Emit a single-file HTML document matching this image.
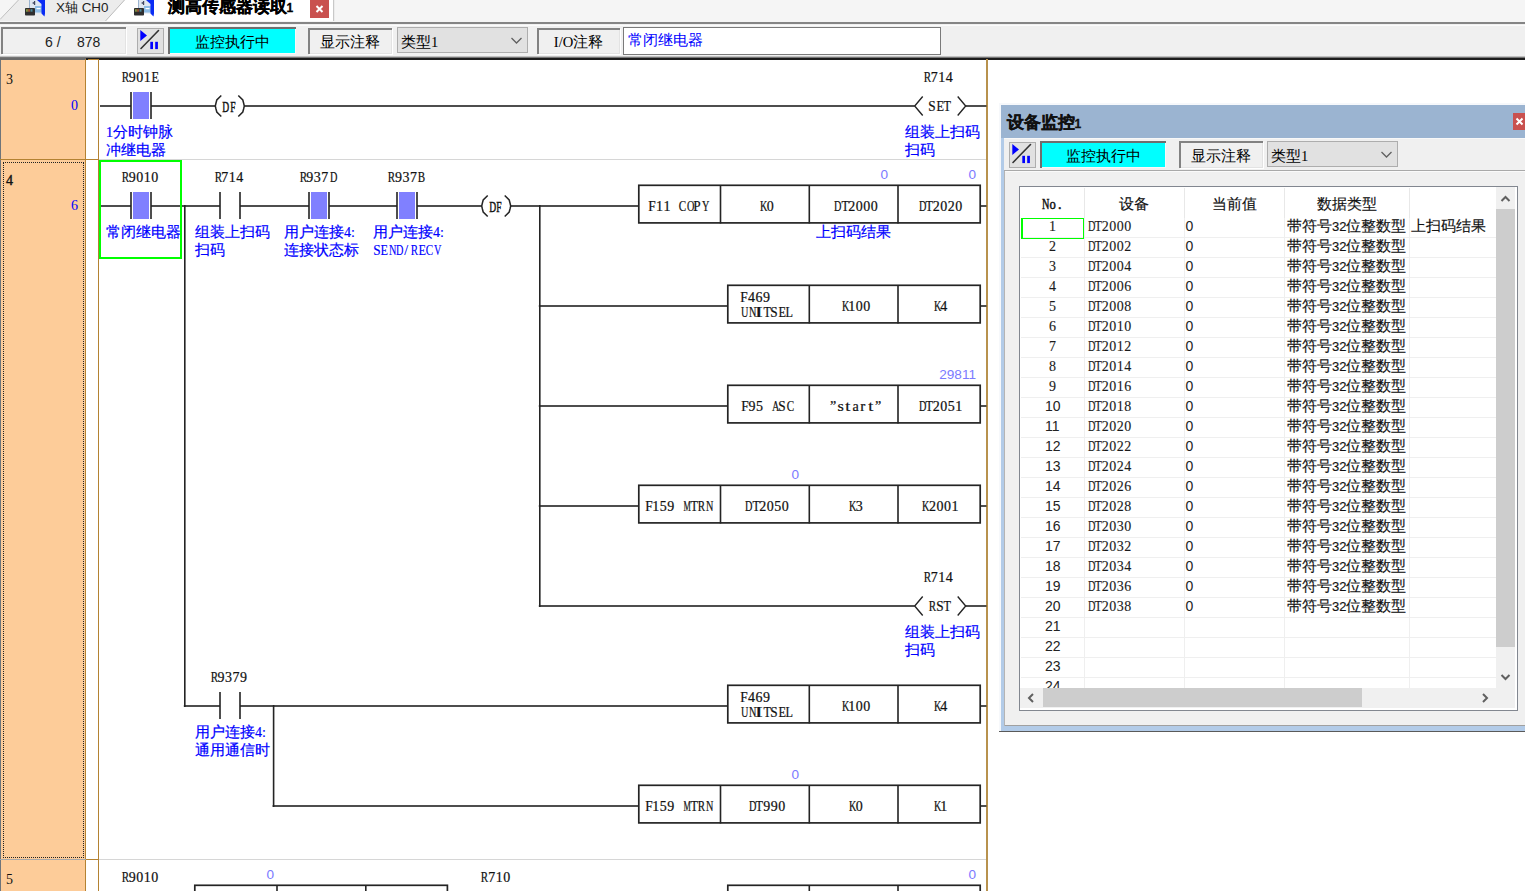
<!DOCTYPE html><html><head><meta charset="utf-8"><style>
html,body{margin:0;padding:0;background:#fff;}
#root{position:relative;width:1525px;height:891px;overflow:hidden;background:#fff;}
#root div{position:absolute;}
.t{white-space:nowrap;font-family:"Liberation Sans",sans-serif;}
.m{white-space:nowrap;font-family:"Liberation Serif",serif;font-size:14px;line-height:14px;color:#111;-webkit-text-stroke:0.22px currentColor;}
.m i{font-style:normal;display:inline-block;width:7.5px;text-align:center;}
.c{white-space:nowrap;font-family:"Liberation Sans",sans-serif;font-size:14.6px;line-height:16px;color:#0000ff;-webkit-text-stroke:0.2px #0000ff;}
.sf{font-family:"Liberation Serif",serif;}
.sf2{font-family:"Liberation Serif",serif;font-size:14px;}
.rn{font-family:"Liberation Serif",serif;font-size:14px;line-height:14px;color:#111;}
.v{font-family:"Liberation Sans",sans-serif;font-size:13.6px;line-height:13px;color:#7b7bff;text-align:right;white-space:nowrap;}
.m2{font-family:"Liberation Serif",serif;font-size:14px;line-height:14px;color:#111;white-space:nowrap;}
.tb{font-family:"Liberation Sans",sans-serif;font-size:14.6px;line-height:18px;color:#111;white-space:nowrap;-webkit-text-stroke:0.15px #111;}
.tn{font-family:"Liberation Sans",sans-serif;font-size:14px;line-height:18px;color:#222;white-space:nowrap;}
.tn2{font-size:13px;}
</style></head><body><div id="root">
<div style="left:0px;top:0px;width:1525px;height:22px;background:#f5f5f5;"></div>
<svg style="position:absolute;left:0;top:0" width="400" height="24"><path d="M0 20 L19 0 L125 0 L106 21 L0 21 Z" fill="#ececec"/><path d="M0 19.5 L18.5 0" stroke="#bdbdbd" stroke-width="1" fill="none"/><path d="M106 21 L125 0 L333 0 L333 21 Z" fill="#ffffff"/><path d="M105.5 21 L124.5 0" stroke="#bdbdbd" stroke-width="1" fill="none"/><rect x="333" y="0" width="1.2" height="21" fill="#c8c8c8"/></svg>
<svg style="position:absolute;left:20px;top:0" width="28" height="18"><rect x="9" y="0" width="13" height="13.5" fill="#dfe6f0"/><rect x="9" y="0" width="1" height="8" fill="#9ab4d0"/><path d="M12 3 L14 1.8 L14 4.2 Z" fill="#505870"/><rect x="14" y="1" width="1.2" height="4" fill="#404860"/><rect x="15" y="6" width="7" height="6.5" fill="#8fbde6"/><rect x="16.5" y="8" width="4" height="1.2" fill="#ffffff"/><path d="M17 0 L25 0 L25 13.5 L24.5 16.5 L21.5 13.5 L21.5 4 Z" fill="#0a2cf5"/><rect x="5" y="8" width="10" height="7.5" rx="0.8" fill="#2e2e2e"/><rect x="6" y="9.2" width="1.3" height="2.5" fill="#7a9a40"/><rect x="7.3" y="9.2" width="1.3" height="2.5" fill="#a09040"/><rect x="8.6" y="9.2" width="1.3" height="2.5" fill="#b04a30"/><rect x="10.5" y="9.2" width="2" height="2.5" fill="#4a8a9a"/></svg>
<svg style="position:absolute;left:129px;top:0" width="28" height="18"><rect x="9" y="0" width="13" height="13.5" fill="#dfe6f0"/><rect x="9" y="0" width="1" height="8" fill="#9ab4d0"/><path d="M12 3 L14 1.8 L14 4.2 Z" fill="#505870"/><rect x="14" y="1" width="1.2" height="4" fill="#404860"/><rect x="15" y="6" width="7" height="6.5" fill="#8fbde6"/><rect x="16.5" y="8" width="4" height="1.2" fill="#ffffff"/><path d="M17 0 L25 0 L25 13.5 L24.5 16.5 L21.5 13.5 L21.5 4 Z" fill="#0a2cf5"/><rect x="5" y="8" width="10" height="7.5" rx="0.8" fill="#2e2e2e"/><rect x="6" y="9.2" width="1.3" height="2.5" fill="#7a9a40"/><rect x="7.3" y="9.2" width="1.3" height="2.5" fill="#a09040"/><rect x="8.6" y="9.2" width="1.3" height="2.5" fill="#b04a30"/><rect x="10.5" y="9.2" width="2" height="2.5" fill="#4a8a9a"/></svg>
<div class="t ui" style="left:56px;top:0px;font-size:13.4px;line-height:16px;color:#222">X轴 CH0</div>
<div class="t ui" style="left:167.5px;top:-3px;font-size:17.4px;line-height:18px;font-weight:bold;color:#000;-webkit-text-stroke:0.3px #000">测高传感器读取<span style="font-size:12px">1</span></div>
<div style="left:310px;top:0px;width:19px;height:18px;background:#c9514f;"></div>
<svg style="position:absolute;left:310px;top:0" width="19" height="18"><path d="M6.5 6 L12.5 12 M12.5 6 L6.5 12" stroke="#fff" stroke-width="2"/></svg>
<div style="left:0px;top:22px;width:1525px;height:2px;background:#858585;"></div>
<div style="left:0px;top:24px;width:1525px;height:33px;background:#f0f0f0;"></div>
<div style="left:0px;top:24.5px;width:1525px;height:1.5px;background:#fbfbfb;"></div>
<div style="left:1px;top:27px;width:125px;height:27px;background:#f0f0f0;box-shadow: inset 2px 2px 0 #828282, inset -1px -1px 0 #e3e3e3, 1px 1px 0 #ffffff;"></div>
<div class="t ui" style="left:45px;top:32.5px;font-size:14px;line-height:18px;color:#222">6 /</div>
<div class="t ui" style="left:77px;top:32.5px;font-size:14px;line-height:18px;color:#222">878</div>
<svg style="position:absolute;left:137px;top:28px" width="28" height="27"><rect x="0.5" y="0.5" width="26" height="25" fill="#e1e1e1" stroke="#adadad"/><path d="M3.3 2 L10 7.5 L3.3 13 Z" fill="#0000ff"/><path d="M4 20.5 L21.5 2.5" stroke="#333" stroke-width="1.6" stroke-linecap="round"/><rect x="13.3" y="13.8" width="2.7" height="7.3" fill="#0000ff"/><rect x="18.2" y="13.8" width="2.7" height="7.3" fill="#0000ff"/></svg>
<div style="left:168px;top:27px;width:128px;height:27px;background:#00ffff;box-shadow: inset 2px 2px 0 #6e6e6e, inset -1px -1px 0 #f8f8f8;"></div>
<div class="t ui" style="left:168px;top:32px;width:128px;text-align:center;font-size:14.6px;line-height:20px;color:#000">监控执行中</div>
<div style="left:308px;top:28px;width:84px;height:26px;background:#f0f0f0;box-shadow: inset 2px 2px 0 #828282, inset -1px -1px 0 #e3e3e3, 1px 1px 0 #ffffff;"></div>
<div class="t ui" style="left:308px;top:32px;width:84px;text-align:center;font-size:14.6px;line-height:20px;color:#000">显示注释</div>
<div style="left:397px;top:27px;width:131px;height:26px;background:#e1e1e1;box-sizing:border-box;border:1px solid #adadad;"></div>
<div class="t ui" style="left:401px;top:32px;font-size:14.6px;line-height:20px;color:#000">类型<span class="sf">1</span></div>
<svg style="position:absolute;left:510px;top:36px" width="14" height="10"><path d="M1.5 2 L6.5 7 L11.5 2" fill="none" stroke="#606060" stroke-width="1.3"/></svg>
<div style="left:537px;top:28px;width:83px;height:26px;background:#f0f0f0;box-shadow: inset 2px 2px 0 #828282, inset -1px -1px 0 #e3e3e3, 1px 1px 0 #ffffff;"></div>
<div class="t ui" style="left:537px;top:32px;width:83px;text-align:center;font-size:14.6px;line-height:20px;color:#000"><span class="sf">I/O</span>注释</div>
<div style="left:623px;top:27px;width:318px;height:28px;background:#ffffff;box-sizing:border-box;border:1px solid #7a7a7a;"></div>
<div class="t ui" style="left:628px;top:30px;font-size:14.6px;line-height:20px;color:#0000ff">常闭继电器</div>
<div style="left:0px;top:56px;width:1525px;height:1px;background:#c0c0c0;"></div>
<div style="left:0px;top:57px;width:1525px;height:1px;background:#767676;"></div>
<div style="left:0px;top:59px;width:1525px;height:832px;background:#ffffff;"></div>
<div style="left:0px;top:58px;width:1525px;height:2px;background:#1c1c1c;"></div>
<div style="left:0px;top:58px;width:86px;height:2px;background:#6a6a6a;"></div>
<div style="left:0px;top:60px;width:86px;height:831px;background:#fdcc99;"></div>
<div style="left:88px;top:59.2px;width:10px;height:1.2px;background:#b48232;"></div>
<div style="left:0px;top:60px;width:1.2px;height:831px;background:#6e747a;"></div>
<div style="left:85px;top:59px;width:1.4px;height:832px;background:#b48232;"></div>
<div style="left:88px;top:59px;width:10px;height:1.2px;background:#b48232;"></div>
<div style="left:98px;top:59px;width:1.4px;height:832px;background:#b48232;"></div>
<div style="left:986.4px;top:59px;width:1.6px;height:832px;background:#b8924e;"></div>
<div style="left:0px;top:159px;width:86px;height:1px;background:#b48232;"></div>
<div style="left:86px;top:159px;width:12px;height:1px;background:#b48232;"></div>
<div style="left:99.4px;top:159px;width:887px;height:1px;background:#d6d6d6;"></div>
<div style="left:0px;top:859px;width:86px;height:1px;background:#a8a8a8;"></div>
<div style="left:86px;top:859px;width:12px;height:1px;background:#b48232;"></div>
<div style="left:99.4px;top:859px;width:887px;height:1px;background:#d6d6d6;"></div>
<div style="left:2.5px;top:161.5px;width:81px;height:696px;box-sizing:border-box;border:1px dotted #222"></div>
<div class="t rn" style="left:6px;top:73px;">3</div>
<div class="t rn" style="left:71px;top:99px;color:#0000ff">0</div>
<div class="t rn" style="left:6px;top:174px;-webkit-text-stroke:0.4px #111">4</div>
<div class="t rn" style="left:71px;top:199px;color:#0000ff">6</div>
<div class="t rn" style="left:6px;top:873px;">5</div>
<div class="m " style="left:120.9px;top:71px;"><i style="transform:scaleX(0.79)">R</i><i>9</i><i>0</i><i>1</i><i style="transform:scaleX(0.87)">E</i></div>
<div class="c" style="left:106px;top:124.3px"><span class="sf2">1</span>分时钟脉</div>
<div class="c" style="left:106px;top:142px">冲继电器</div>
<div class="m " style="left:221.4px;top:100.5px;-webkit-text-stroke:0.45px currentColor"><i style="transform:scaleX(0.68)">D</i><i style="transform:scaleX(0.68)">F</i></div>
<div class="m " style="left:928.3px;top:99.5px;"><i style="transform:scaleX(0.95)">S</i><i style="transform:scaleX(0.87)">E</i><i style="transform:scaleX(0.87)">T</i></div>
<div class="m " style="left:922.9px;top:71px;"><i style="transform:scaleX(0.79)">R</i><i>7</i><i>1</i><i>4</i></div>
<div class="c" style="left:905px;top:124.3px">组装上扫码</div>
<div class="c" style="left:905px;top:142px">扫码</div>
<div class="m " style="left:120.9px;top:171px;"><i style="transform:scaleX(0.79)">R</i><i>9</i><i>0</i><i>1</i><i>0</i></div>
<div class="m " style="left:213.5px;top:171px;"><i style="transform:scaleX(0.79)">R</i><i>7</i><i>1</i><i>4</i></div>
<div class="m " style="left:298.6px;top:171px;"><i style="transform:scaleX(0.79)">R</i><i>9</i><i>3</i><i>7</i><i style="transform:scaleX(0.73)">D</i></div>
<div class="m " style="left:387.3px;top:171px;"><i style="transform:scaleX(0.79)">R</i><i>9</i><i>3</i><i>7</i><i style="transform:scaleX(0.79)">B</i></div>
<div class="c" style="left:106px;top:224.3px">常闭继电器</div>
<div class="c" style="left:195px;top:224.3px">组装上扫码</div>
<div class="c" style="left:195px;top:242px">扫码</div>
<div class="c" style="left:284px;top:224.3px">用户连接<span class="sf2">4:</span></div>
<div class="c" style="left:284px;top:242px">连接状态标</div>
<div class="c" style="left:373px;top:224.3px">用户连接<span class="sf2">4:</span></div>
<div class="m " style="left:372.5px;top:243.5px;color:#0000ff;-webkit-text-stroke:0.15px currentColor"><i style="transform:scaleX(0.95)">S</i><i style="transform:scaleX(0.87)">E</i><i style="transform:scaleX(0.73)">N</i><i style="transform:scaleX(0.73)">D</i><i>/</i><i style="transform:scaleX(0.79)">R</i><i style="transform:scaleX(0.87)">E</i><i style="transform:scaleX(0.79)">C</i><i style="transform:scaleX(0.73)">V</i></div>
<div class="m " style="left:487.8px;top:200.5px;-webkit-text-stroke:0.45px currentColor"><i style="transform:scaleX(0.68)">D</i><i style="transform:scaleX(0.68)">F</i></div>
<div class="m " style="left:648.2px;top:199.5px;"><i style="transform:scaleX(0.95)">F</i><i>1</i><i>1</i><i>&nbsp;</i><i style="transform:scaleX(0.79)">C</i><i style="transform:scaleX(0.73)">O</i><i style="transform:scaleX(0.95)">P</i><i style="transform:scaleX(0.73)">Y</i></div>
<div class="m " style="left:759.1px;top:199.5px;"><i style="transform:scaleX(0.73)">K</i><i>0</i></div>
<div class="m " style="left:833.1px;top:199.5px;"><i style="transform:scaleX(0.73)">D</i><i style="transform:scaleX(0.87)">T</i><i>2</i><i>0</i><i>0</i><i>0</i></div>
<div class="m " style="left:917.5px;top:199.5px;"><i style="transform:scaleX(0.73)">D</i><i style="transform:scaleX(0.87)">T</i><i>2</i><i>0</i><i>2</i><i>0</i></div>
<div class="v" style="left:880.5px;top:168px;width:7.5px">0</div>
<div class="v" style="left:968.5px;top:168px;width:7.5px">0</div>
<div class="c" style="left:816px;top:224.3px">上扫码结果</div>
<div class="m " style="left:740.3px;top:291px;"><i style="transform:scaleX(0.95)">F</i><i>4</i><i>6</i><i>9</i></div>
<div class="m " style="left:740.3px;top:306px;"><i style="transform:scaleX(0.73)">U</i><i style="transform:scaleX(0.73)">N</i><i style="transform:scaleX(1.72)">I</i><i style="transform:scaleX(0.87)">T</i><i style="transform:scaleX(0.95)">S</i><i style="transform:scaleX(0.87)">E</i><i style="transform:scaleX(0.87)">L</i></div>
<div class="m " style="left:840.6px;top:299.5px;"><i style="transform:scaleX(0.73)">K</i><i>1</i><i>0</i><i>0</i></div>
<div class="m " style="left:932.5px;top:299.5px;"><i style="transform:scaleX(0.73)">K</i><i>4</i></div>
<div class="m " style="left:740.8px;top:399.5px;"><i style="transform:scaleX(0.95)">F</i><i>9</i><i>5</i><i>&nbsp;</i><i style="transform:scaleX(0.73)">A</i><i style="transform:scaleX(0.95)">S</i><i style="transform:scaleX(0.79)">C</i></div>
<div class="m " style="left:829.4px;top:399.5px;"><i>”</i><i style="transform:scaleX(1.16)">s</i><i style="transform:scaleX(1.29)">t</i><i style="transform:scaleX(1.01)">a</i><i style="transform:scaleX(1.07)">r</i><i style="transform:scaleX(1.29)">t</i><i>”</i></div>
<div class="m " style="left:917.5px;top:399.5px;"><i style="transform:scaleX(0.73)">D</i><i style="transform:scaleX(0.87)">T</i><i>2</i><i>0</i><i>5</i><i>1</i></div>
<div class="v" style="left:938.5px;top:368px;width:37.5px">29811</div>
<div class="m " style="left:644.5px;top:499.5px;"><i style="transform:scaleX(0.95)">F</i><i>1</i><i>5</i><i>9</i><i>&nbsp;</i><i style="transform:scaleX(0.59)">M</i><i style="transform:scaleX(0.87)">T</i><i style="transform:scaleX(0.79)">R</i><i style="transform:scaleX(0.73)">N</i></div>
<div class="m " style="left:744.1px;top:499.5px;"><i style="transform:scaleX(0.73)">D</i><i style="transform:scaleX(0.87)">T</i><i>2</i><i>0</i><i>5</i><i>0</i></div>
<div class="m " style="left:848.1px;top:499.5px;"><i style="transform:scaleX(0.73)">K</i><i>3</i></div>
<div class="m " style="left:921.2px;top:499.5px;"><i style="transform:scaleX(0.73)">K</i><i>2</i><i>0</i><i>0</i><i>1</i></div>
<div class="v" style="left:791.5px;top:468px;width:7.5px">0</div>
<div class="m " style="left:928.3px;top:599.5px;"><i style="transform:scaleX(0.79)">R</i><i style="transform:scaleX(0.95)">S</i><i style="transform:scaleX(0.87)">T</i></div>
<div class="m " style="left:922.9px;top:571px;"><i style="transform:scaleX(0.79)">R</i><i>7</i><i>1</i><i>4</i></div>
<div class="c" style="left:905px;top:624.3px">组装上扫码</div>
<div class="c" style="left:905px;top:642px">扫码</div>
<div class="m " style="left:209.8px;top:671px;"><i style="transform:scaleX(0.79)">R</i><i>9</i><i>3</i><i>7</i><i>9</i></div>
<div class="m " style="left:740.3px;top:691px;"><i style="transform:scaleX(0.95)">F</i><i>4</i><i>6</i><i>9</i></div>
<div class="m " style="left:740.3px;top:706px;"><i style="transform:scaleX(0.73)">U</i><i style="transform:scaleX(0.73)">N</i><i style="transform:scaleX(1.72)">I</i><i style="transform:scaleX(0.87)">T</i><i style="transform:scaleX(0.95)">S</i><i style="transform:scaleX(0.87)">E</i><i style="transform:scaleX(0.87)">L</i></div>
<div class="m " style="left:840.6px;top:699.5px;"><i style="transform:scaleX(0.73)">K</i><i>1</i><i>0</i><i>0</i></div>
<div class="m " style="left:932.5px;top:699.5px;"><i style="transform:scaleX(0.73)">K</i><i>4</i></div>
<div class="c" style="left:195px;top:724.3px">用户连接<span class="sf2">4:</span></div>
<div class="c" style="left:195px;top:742px">通用通信时</div>
<div class="m " style="left:644.5px;top:799.5px;"><i style="transform:scaleX(0.95)">F</i><i>1</i><i>5</i><i>9</i><i>&nbsp;</i><i style="transform:scaleX(0.59)">M</i><i style="transform:scaleX(0.87)">T</i><i style="transform:scaleX(0.79)">R</i><i style="transform:scaleX(0.73)">N</i></div>
<div class="m " style="left:747.9px;top:799.5px;"><i style="transform:scaleX(0.73)">D</i><i style="transform:scaleX(0.87)">T</i><i>9</i><i>9</i><i>0</i></div>
<div class="m " style="left:848.1px;top:799.5px;"><i style="transform:scaleX(0.73)">K</i><i>0</i></div>
<div class="m " style="left:932.5px;top:799.5px;"><i style="transform:scaleX(0.73)">K</i><i>1</i></div>
<div class="v" style="left:791.5px;top:768px;width:7.5px">0</div>
<div class="m " style="left:120.9px;top:871px;"><i style="transform:scaleX(0.79)">R</i><i>9</i><i>0</i><i>1</i><i>0</i></div>
<div class="v" style="left:266.5px;top:868px;width:7.5px">0</div>
<div class="m " style="left:480.4px;top:871px;"><i style="transform:scaleX(0.79)">R</i><i>7</i><i>1</i><i>0</i></div>
<div class="v" style="left:968.5px;top:868px;width:7.5px">0</div>
<svg id="lad" width="1525" height="891" style="position:absolute;left:0;top:0;z-index:1"><rect x="130.2" y="92" width="1.6" height="27" fill="#242424"/><rect x="150.2" y="92" width="1.6" height="27" fill="#242424"/><rect x="133" y="92" width="16" height="27" fill="#8080ff"/><rect x="100" y="105.2" width="31" height="1.6" fill="#242424"/><path d="M221.3 95.5 L216.8 100 L216.0 103 L215.3 106 L216.0 109 L216.8 112 L221.3 116.5" fill="none" stroke="#242424" stroke-width="1.5"/><path d="M238.3 95.5 L242.8 100 L243.60000000000002 103 L244.3 106 L243.60000000000002 109 L242.8 112 L238.3 116.5" fill="none" stroke="#242424" stroke-width="1.5"/><rect x="151" y="105.2" width="64.30000000000001" height="1.6" fill="#242424"/><path d="M922.6999999999999 96.5 L914.6999999999999 106 L922.6999999999999 115.5" fill="none" stroke="#242424" stroke-width="1.4"/><path d="M957.6999999999999 96.5 L965.6999999999999 106 L957.6999999999999 115.5" fill="none" stroke="#242424" stroke-width="1.4"/><rect x="244.3" y="105.2" width="670.3999999999999" height="1.6" fill="#242424"/><rect x="965.6999999999999" y="105.2" width="20.800000000000068" height="1.6" fill="#242424"/><rect x="130.2" y="192" width="1.6" height="27" fill="#242424"/><rect x="150.2" y="192" width="1.6" height="27" fill="#242424"/><rect x="133" y="192" width="16" height="27" fill="#8080ff"/><rect x="219.2" y="192" width="1.6" height="27" fill="#242424"/><rect x="239.2" y="192" width="1.6" height="27" fill="#242424"/><rect x="308.2" y="192" width="1.6" height="27" fill="#242424"/><rect x="328.2" y="192" width="1.6" height="27" fill="#242424"/><rect x="311" y="192" width="16" height="27" fill="#8080ff"/><rect x="396.2" y="192" width="1.6" height="27" fill="#242424"/><rect x="416.2" y="192" width="1.6" height="27" fill="#242424"/><rect x="399" y="192" width="16" height="27" fill="#8080ff"/><rect x="100" y="205.2" width="31" height="1.6" fill="#242424"/><rect x="151" y="205.2" width="69" height="1.6" fill="#242424"/><rect x="240" y="205.2" width="69" height="1.6" fill="#242424"/><rect x="329" y="205.2" width="68" height="1.6" fill="#242424"/><path d="M487.7 195.5 L483.2 200 L482.4 203 L481.7 206 L482.4 209 L483.2 212 L487.7 216.5" fill="none" stroke="#242424" stroke-width="1.5"/><path d="M504.7 195.5 L509.2 200 L510.0 203 L510.7 206 L510.0 209 L509.2 212 L504.7 216.5" fill="none" stroke="#242424" stroke-width="1.5"/><rect x="417" y="205.2" width="64.69999999999999" height="1.6" fill="#242424"/><rect x="638.8" y="185.3" width="341.4" height="37.6" fill="none" stroke="#242424" stroke-width="1.7"/><rect x="719.7" y="185" width="1.6" height="38.5" fill="#242424"/><rect x="808.5" y="185" width="1.6" height="38.5" fill="#242424"/><rect x="897.2" y="185" width="1.6" height="38.5" fill="#242424"/><rect x="981" y="205.2" width="5.5" height="1.6" fill="#242424"/><rect x="510.7" y="205.2" width="128.3" height="1.6" fill="#242424"/><rect x="539.0" y="205" width="1.6" height="402" fill="#242424"/><rect x="727.8" y="285.3" width="252.4" height="37.6" fill="none" stroke="#242424" stroke-width="1.7"/><rect x="808.5" y="285" width="1.6" height="38.5" fill="#242424"/><rect x="897.2" y="285" width="1.6" height="38.5" fill="#242424"/><rect x="981" y="305.2" width="5.5" height="1.6" fill="#242424"/><rect x="538.8" y="305.2" width="189.20000000000005" height="1.6" fill="#242424"/><rect x="727.8" y="385.3" width="252.4" height="37.6" fill="none" stroke="#242424" stroke-width="1.7"/><rect x="808.5" y="385" width="1.6" height="38.5" fill="#242424"/><rect x="897.2" y="385" width="1.6" height="38.5" fill="#242424"/><rect x="981" y="405.2" width="5.5" height="1.6" fill="#242424"/><rect x="538.8" y="405.2" width="189.20000000000005" height="1.6" fill="#242424"/><rect x="638.8" y="485.3" width="341.4" height="37.6" fill="none" stroke="#242424" stroke-width="1.7"/><rect x="719.7" y="485" width="1.6" height="38.5" fill="#242424"/><rect x="808.5" y="485" width="1.6" height="38.5" fill="#242424"/><rect x="897.2" y="485" width="1.6" height="38.5" fill="#242424"/><rect x="981" y="505.2" width="5.5" height="1.6" fill="#242424"/><rect x="538.8" y="505.2" width="100.20000000000005" height="1.6" fill="#242424"/><path d="M922.6999999999999 596.5 L914.6999999999999 606 L922.6999999999999 615.5" fill="none" stroke="#242424" stroke-width="1.4"/><path d="M957.6999999999999 596.5 L965.6999999999999 606 L957.6999999999999 615.5" fill="none" stroke="#242424" stroke-width="1.4"/><rect x="538.8" y="605.2" width="375.9" height="1.6" fill="#242424"/><rect x="965.6999999999999" y="605.2" width="20.800000000000068" height="1.6" fill="#242424"/><rect x="184.0" y="205" width="1.6" height="502" fill="#242424"/><rect x="219.2" y="692" width="1.6" height="27" fill="#242424"/><rect x="239.2" y="692" width="1.6" height="27" fill="#242424"/><rect x="183.8" y="705.2" width="36.19999999999999" height="1.6" fill="#242424"/><rect x="727.8" y="685.3" width="252.4" height="37.6" fill="none" stroke="#242424" stroke-width="1.7"/><rect x="808.5" y="685" width="1.6" height="38.5" fill="#242424"/><rect x="897.2" y="685" width="1.6" height="38.5" fill="#242424"/><rect x="981" y="705.2" width="5.5" height="1.6" fill="#242424"/><rect x="240" y="705.2" width="488" height="1.6" fill="#242424"/><rect x="272.8" y="705" width="1.6" height="102" fill="#242424"/><rect x="638.8" y="785.3" width="341.4" height="37.6" fill="none" stroke="#242424" stroke-width="1.7"/><rect x="719.7" y="785" width="1.6" height="38.5" fill="#242424"/><rect x="808.5" y="785" width="1.6" height="38.5" fill="#242424"/><rect x="897.2" y="785" width="1.6" height="38.5" fill="#242424"/><rect x="981" y="805.2" width="5.5" height="1.6" fill="#242424"/><rect x="272.6" y="805.2" width="366.4" height="1.6" fill="#242424"/><rect x="194.8" y="885.3" width="252.6" height="37.6" fill="none" stroke="#242424" stroke-width="1.7"/><rect x="276.2" y="885" width="1.6" height="38.5" fill="#242424"/><rect x="365.0" y="885" width="1.6" height="38.5" fill="#242424"/><rect x="448.2" y="905.2" width="538.3" height="1.6" fill="#242424"/><rect x="727.8" y="885.3" width="252.4" height="37.6" fill="none" stroke="#242424" stroke-width="1.7"/><rect x="808.5" y="885" width="1.6" height="38.5" fill="#242424"/><rect x="897.2" y="885" width="1.6" height="38.5" fill="#242424"/><rect x="981" y="905.2" width="5.5" height="1.6" fill="#242424"/></svg>
<div style="left:99px;top:160px;width:83px;height:99px;box-sizing:border-box;border:2px solid #00ff00;z-index:2"></div>
<div style="left:999px;top:103px;width:526px;height:629px;background:#f6f8fb;"></div>
<div style="left:1001px;top:105px;width:524px;height:33px;background:#9bb4d1;"></div>
<div class="t ui" style="left:1006.5px;top:113px;font-size:17.4px;line-height:18px;font-weight:bold;color:#111;-webkit-text-stroke:0.3px #111">设备监控<span style="font-size:12px">1</span></div>
<div style="left:1513px;top:113px;width:12px;height:17px;background:#c9514f;"></div>
<svg style="position:absolute;left:1513px;top:113px" width="12" height="17"><path d="M3.5 5.5 L9.5 11.5 M9.5 5.5 L3.5 11.5" stroke="#fff" stroke-width="2"/></svg>
<div style="left:1001px;top:138px;width:524px;height:593px;background:#b2cbe8;"></div>
<div style="left:1004px;top:138px;width:521px;height:588px;background:#f0f0f0;"></div>
<div style="left:1004px;top:138px;width:521px;height:1px;background:#f8f8f8;"></div>
<svg style="position:absolute;left:1009px;top:142px" width="28" height="27"><rect x="0.5" y="0.5" width="26" height="25" fill="#e1e1e1" stroke="#adadad"/><path d="M3.3 2 L10 7.5 L3.3 13 Z" fill="#0000ff"/><path d="M4 20.5 L21.5 2.5" stroke="#333" stroke-width="1.6" stroke-linecap="round"/><rect x="13.3" y="13.8" width="2.7" height="7.3" fill="#0000ff"/><rect x="18.2" y="13.8" width="2.7" height="7.3" fill="#0000ff"/></svg>
<div style="left:1040px;top:141px;width:126px;height:27px;background:#00ffff;box-shadow: inset 2px 2px 0 #6e6e6e, inset -1px -1px 0 #f8f8f8;"></div>
<div class="t ui" style="left:1040px;top:146px;width:126px;text-align:center;font-size:14.6px;line-height:20px;color:#000">监控执行中</div>
<div style="left:1179px;top:141px;width:84px;height:27px;background:#f0f0f0;box-shadow: inset 2px 2px 0 #828282, inset -1px -1px 0 #e3e3e3, 1px 1px 0 #ffffff;"></div>
<div class="t ui" style="left:1179px;top:146px;width:84px;text-align:center;font-size:14.6px;line-height:20px;color:#000">显示注释</div>
<div style="left:1267px;top:141px;width:131px;height:26px;background:#e1e1e1;box-sizing:border-box;border:1px solid #adadad;"></div>
<div class="t ui" style="left:1271px;top:146px;font-size:14.6px;line-height:20px;color:#000">类型<span class="sf">1</span></div>
<svg style="position:absolute;left:1380px;top:150px" width="14" height="10"><path d="M1.5 2 L6.5 7 L11.5 2" fill="none" stroke="#606060" stroke-width="1.3"/></svg>
<div style="left:1004px;top:170px;width:521px;height:1px;background:#a9a9a9;"></div>
<div style="left:1004px;top:171px;width:521px;height:1px;background:#fafafa;"></div>
<div style="left:1004px;top:725px;width:521px;height:1px;background:#a0a0a0;"></div>
<div style="left:1004px;top:171px;width:1px;height:555px;background:#b4b4b4;"></div>
<div style="left:999px;top:730.5px;width:526px;height:1.6px;background:#5a5a5a;"></div>
<div style="left:1019px;top:186px;width:499px;height:525px;background:#ffffff;box-sizing:border-box;border:1px solid #828790;"></div>
<div style="left:1084px;top:188px;width:1px;height:30px;background:#e8e8e8;"></div>
<div style="left:1184px;top:188px;width:1px;height:30px;background:#e8e8e8;"></div>
<div style="left:1284px;top:188px;width:1px;height:30px;background:#e8e8e8;"></div>
<div style="left:1409px;top:188px;width:1px;height:30px;background:#e8e8e8;"></div>
<div style="left:1021px;top:237px;width:475px;height:1px;background:#efefef;"></div>
<div style="left:1021px;top:257px;width:475px;height:1px;background:#efefef;"></div>
<div style="left:1021px;top:277px;width:475px;height:1px;background:#efefef;"></div>
<div style="left:1021px;top:297px;width:475px;height:1px;background:#efefef;"></div>
<div style="left:1021px;top:317px;width:475px;height:1px;background:#efefef;"></div>
<div style="left:1021px;top:337px;width:475px;height:1px;background:#efefef;"></div>
<div style="left:1021px;top:357px;width:475px;height:1px;background:#efefef;"></div>
<div style="left:1021px;top:377px;width:475px;height:1px;background:#efefef;"></div>
<div style="left:1021px;top:397px;width:475px;height:1px;background:#efefef;"></div>
<div style="left:1021px;top:417px;width:475px;height:1px;background:#efefef;"></div>
<div style="left:1021px;top:437px;width:475px;height:1px;background:#efefef;"></div>
<div style="left:1021px;top:457px;width:475px;height:1px;background:#efefef;"></div>
<div style="left:1021px;top:477px;width:475px;height:1px;background:#efefef;"></div>
<div style="left:1021px;top:497px;width:475px;height:1px;background:#efefef;"></div>
<div style="left:1021px;top:517px;width:475px;height:1px;background:#efefef;"></div>
<div style="left:1021px;top:537px;width:475px;height:1px;background:#efefef;"></div>
<div style="left:1021px;top:557px;width:475px;height:1px;background:#efefef;"></div>
<div style="left:1021px;top:577px;width:475px;height:1px;background:#efefef;"></div>
<div style="left:1021px;top:597px;width:475px;height:1px;background:#efefef;"></div>
<div style="left:1021px;top:617px;width:475px;height:1px;background:#efefef;"></div>
<div style="left:1021px;top:637px;width:475px;height:1px;background:#efefef;"></div>
<div style="left:1021px;top:657px;width:475px;height:1px;background:#efefef;"></div>
<div style="left:1021px;top:677px;width:475px;height:1px;background:#efefef;"></div>
<div style="left:1021px;top:697px;width:475px;height:1px;background:#efefef;"></div>
<div style="left:1084px;top:218px;width:1px;height:470px;background:#efefef;"></div>
<div style="left:1184px;top:218px;width:1px;height:470px;background:#efefef;"></div>
<div style="left:1284px;top:218px;width:1px;height:470px;background:#efefef;"></div>
<div style="left:1409px;top:218px;width:1px;height:470px;background:#efefef;"></div>
<div class="m " style="left:1041px;top:198px;color:#111;-webkit-text-stroke:0.5px currentColor"><i style="transform:scaleX(0.73)">N</i><i style="transform:scaleX(0.90)">o</i><i>.</i></div>
<div class="t tb" style="left:1084px;top:195px;width:100px;text-align:center">设备</div>
<div class="t tb" style="left:1184px;top:195px;width:100px;text-align:center">当前值</div>
<div class="t tb" style="left:1284px;top:195px;width:125px;text-align:center">数据类型</div>
<div class="m tbl" style="left:1048.8px;top:219.5px;color:#1a1a1a;-webkit-text-stroke:0.12px currentColor"><i>1</i></div>
<div class="m tbl" style="left:1086.5px;top:219.5px;color:#1a1a1a;-webkit-text-stroke:0.12px currentColor"><i style="transform:scaleX(0.73)">D</i><i style="transform:scaleX(0.87)">T</i><i>2</i><i>0</i><i>0</i><i>0</i></div>
<div class="t tn" style="left:1185.5px;top:216.5px;">0</div>
<div class="t tb" style="left:1287px;top:216.5px;">带符号<span class="tn2">32</span>位整数型</div>
<div class="m tbl" style="left:1048.8px;top:239.5px;color:#1a1a1a;-webkit-text-stroke:0.12px currentColor"><i>2</i></div>
<div class="m tbl" style="left:1086.5px;top:239.5px;color:#1a1a1a;-webkit-text-stroke:0.12px currentColor"><i style="transform:scaleX(0.73)">D</i><i style="transform:scaleX(0.87)">T</i><i>2</i><i>0</i><i>0</i><i>2</i></div>
<div class="t tn" style="left:1185.5px;top:236.5px;">0</div>
<div class="t tb" style="left:1287px;top:236.5px;">带符号<span class="tn2">32</span>位整数型</div>
<div class="m tbl" style="left:1048.8px;top:259.5px;color:#1a1a1a;-webkit-text-stroke:0.12px currentColor"><i>3</i></div>
<div class="m tbl" style="left:1086.5px;top:259.5px;color:#1a1a1a;-webkit-text-stroke:0.12px currentColor"><i style="transform:scaleX(0.73)">D</i><i style="transform:scaleX(0.87)">T</i><i>2</i><i>0</i><i>0</i><i>4</i></div>
<div class="t tn" style="left:1185.5px;top:256.5px;">0</div>
<div class="t tb" style="left:1287px;top:256.5px;">带符号<span class="tn2">32</span>位整数型</div>
<div class="m tbl" style="left:1048.8px;top:279.5px;color:#1a1a1a;-webkit-text-stroke:0.12px currentColor"><i>4</i></div>
<div class="m tbl" style="left:1086.5px;top:279.5px;color:#1a1a1a;-webkit-text-stroke:0.12px currentColor"><i style="transform:scaleX(0.73)">D</i><i style="transform:scaleX(0.87)">T</i><i>2</i><i>0</i><i>0</i><i>6</i></div>
<div class="t tn" style="left:1185.5px;top:276.5px;">0</div>
<div class="t tb" style="left:1287px;top:276.5px;">带符号<span class="tn2">32</span>位整数型</div>
<div class="m tbl" style="left:1048.8px;top:299.5px;color:#1a1a1a;-webkit-text-stroke:0.12px currentColor"><i>5</i></div>
<div class="m tbl" style="left:1086.5px;top:299.5px;color:#1a1a1a;-webkit-text-stroke:0.12px currentColor"><i style="transform:scaleX(0.73)">D</i><i style="transform:scaleX(0.87)">T</i><i>2</i><i>0</i><i>0</i><i>8</i></div>
<div class="t tn" style="left:1185.5px;top:296.5px;">0</div>
<div class="t tb" style="left:1287px;top:296.5px;">带符号<span class="tn2">32</span>位整数型</div>
<div class="m tbl" style="left:1048.8px;top:319.5px;color:#1a1a1a;-webkit-text-stroke:0.12px currentColor"><i>6</i></div>
<div class="m tbl" style="left:1086.5px;top:319.5px;color:#1a1a1a;-webkit-text-stroke:0.12px currentColor"><i style="transform:scaleX(0.73)">D</i><i style="transform:scaleX(0.87)">T</i><i>2</i><i>0</i><i>1</i><i>0</i></div>
<div class="t tn" style="left:1185.5px;top:316.5px;">0</div>
<div class="t tb" style="left:1287px;top:316.5px;">带符号<span class="tn2">32</span>位整数型</div>
<div class="m tbl" style="left:1048.8px;top:339.5px;color:#1a1a1a;-webkit-text-stroke:0.12px currentColor"><i>7</i></div>
<div class="m tbl" style="left:1086.5px;top:339.5px;color:#1a1a1a;-webkit-text-stroke:0.12px currentColor"><i style="transform:scaleX(0.73)">D</i><i style="transform:scaleX(0.87)">T</i><i>2</i><i>0</i><i>1</i><i>2</i></div>
<div class="t tn" style="left:1185.5px;top:336.5px;">0</div>
<div class="t tb" style="left:1287px;top:336.5px;">带符号<span class="tn2">32</span>位整数型</div>
<div class="m tbl" style="left:1048.8px;top:359.5px;color:#1a1a1a;-webkit-text-stroke:0.12px currentColor"><i>8</i></div>
<div class="m tbl" style="left:1086.5px;top:359.5px;color:#1a1a1a;-webkit-text-stroke:0.12px currentColor"><i style="transform:scaleX(0.73)">D</i><i style="transform:scaleX(0.87)">T</i><i>2</i><i>0</i><i>1</i><i>4</i></div>
<div class="t tn" style="left:1185.5px;top:356.5px;">0</div>
<div class="t tb" style="left:1287px;top:356.5px;">带符号<span class="tn2">32</span>位整数型</div>
<div class="m tbl" style="left:1048.8px;top:379.5px;color:#1a1a1a;-webkit-text-stroke:0.12px currentColor"><i>9</i></div>
<div class="m tbl" style="left:1086.5px;top:379.5px;color:#1a1a1a;-webkit-text-stroke:0.12px currentColor"><i style="transform:scaleX(0.73)">D</i><i style="transform:scaleX(0.87)">T</i><i>2</i><i>0</i><i>1</i><i>6</i></div>
<div class="t tn" style="left:1185.5px;top:376.5px;">0</div>
<div class="t tb" style="left:1287px;top:376.5px;">带符号<span class="tn2">32</span>位整数型</div>
<div class="t tn" style="left:1045px;top:397px;">10</div>
<div class="m tbl" style="left:1086.5px;top:399.5px;color:#1a1a1a;-webkit-text-stroke:0.12px currentColor"><i style="transform:scaleX(0.73)">D</i><i style="transform:scaleX(0.87)">T</i><i>2</i><i>0</i><i>1</i><i>8</i></div>
<div class="t tn" style="left:1185.5px;top:396.5px;">0</div>
<div class="t tb" style="left:1287px;top:396.5px;">带符号<span class="tn2">32</span>位整数型</div>
<div class="t tn" style="left:1045px;top:417px;">11</div>
<div class="m tbl" style="left:1086.5px;top:419.5px;color:#1a1a1a;-webkit-text-stroke:0.12px currentColor"><i style="transform:scaleX(0.73)">D</i><i style="transform:scaleX(0.87)">T</i><i>2</i><i>0</i><i>2</i><i>0</i></div>
<div class="t tn" style="left:1185.5px;top:416.5px;">0</div>
<div class="t tb" style="left:1287px;top:416.5px;">带符号<span class="tn2">32</span>位整数型</div>
<div class="t tn" style="left:1045px;top:437px;">12</div>
<div class="m tbl" style="left:1086.5px;top:439.5px;color:#1a1a1a;-webkit-text-stroke:0.12px currentColor"><i style="transform:scaleX(0.73)">D</i><i style="transform:scaleX(0.87)">T</i><i>2</i><i>0</i><i>2</i><i>2</i></div>
<div class="t tn" style="left:1185.5px;top:436.5px;">0</div>
<div class="t tb" style="left:1287px;top:436.5px;">带符号<span class="tn2">32</span>位整数型</div>
<div class="t tn" style="left:1045px;top:457px;">13</div>
<div class="m tbl" style="left:1086.5px;top:459.5px;color:#1a1a1a;-webkit-text-stroke:0.12px currentColor"><i style="transform:scaleX(0.73)">D</i><i style="transform:scaleX(0.87)">T</i><i>2</i><i>0</i><i>2</i><i>4</i></div>
<div class="t tn" style="left:1185.5px;top:456.5px;">0</div>
<div class="t tb" style="left:1287px;top:456.5px;">带符号<span class="tn2">32</span>位整数型</div>
<div class="t tn" style="left:1045px;top:477px;">14</div>
<div class="m tbl" style="left:1086.5px;top:479.5px;color:#1a1a1a;-webkit-text-stroke:0.12px currentColor"><i style="transform:scaleX(0.73)">D</i><i style="transform:scaleX(0.87)">T</i><i>2</i><i>0</i><i>2</i><i>6</i></div>
<div class="t tn" style="left:1185.5px;top:476.5px;">0</div>
<div class="t tb" style="left:1287px;top:476.5px;">带符号<span class="tn2">32</span>位整数型</div>
<div class="t tn" style="left:1045px;top:497px;">15</div>
<div class="m tbl" style="left:1086.5px;top:499.5px;color:#1a1a1a;-webkit-text-stroke:0.12px currentColor"><i style="transform:scaleX(0.73)">D</i><i style="transform:scaleX(0.87)">T</i><i>2</i><i>0</i><i>2</i><i>8</i></div>
<div class="t tn" style="left:1185.5px;top:496.5px;">0</div>
<div class="t tb" style="left:1287px;top:496.5px;">带符号<span class="tn2">32</span>位整数型</div>
<div class="t tn" style="left:1045px;top:517px;">16</div>
<div class="m tbl" style="left:1086.5px;top:519.5px;color:#1a1a1a;-webkit-text-stroke:0.12px currentColor"><i style="transform:scaleX(0.73)">D</i><i style="transform:scaleX(0.87)">T</i><i>2</i><i>0</i><i>3</i><i>0</i></div>
<div class="t tn" style="left:1185.5px;top:516.5px;">0</div>
<div class="t tb" style="left:1287px;top:516.5px;">带符号<span class="tn2">32</span>位整数型</div>
<div class="t tn" style="left:1045px;top:537px;">17</div>
<div class="m tbl" style="left:1086.5px;top:539.5px;color:#1a1a1a;-webkit-text-stroke:0.12px currentColor"><i style="transform:scaleX(0.73)">D</i><i style="transform:scaleX(0.87)">T</i><i>2</i><i>0</i><i>3</i><i>2</i></div>
<div class="t tn" style="left:1185.5px;top:536.5px;">0</div>
<div class="t tb" style="left:1287px;top:536.5px;">带符号<span class="tn2">32</span>位整数型</div>
<div class="t tn" style="left:1045px;top:557px;">18</div>
<div class="m tbl" style="left:1086.5px;top:559.5px;color:#1a1a1a;-webkit-text-stroke:0.12px currentColor"><i style="transform:scaleX(0.73)">D</i><i style="transform:scaleX(0.87)">T</i><i>2</i><i>0</i><i>3</i><i>4</i></div>
<div class="t tn" style="left:1185.5px;top:556.5px;">0</div>
<div class="t tb" style="left:1287px;top:556.5px;">带符号<span class="tn2">32</span>位整数型</div>
<div class="t tn" style="left:1045px;top:577px;">19</div>
<div class="m tbl" style="left:1086.5px;top:579.5px;color:#1a1a1a;-webkit-text-stroke:0.12px currentColor"><i style="transform:scaleX(0.73)">D</i><i style="transform:scaleX(0.87)">T</i><i>2</i><i>0</i><i>3</i><i>6</i></div>
<div class="t tn" style="left:1185.5px;top:576.5px;">0</div>
<div class="t tb" style="left:1287px;top:576.5px;">带符号<span class="tn2">32</span>位整数型</div>
<div class="t tn" style="left:1045px;top:597px;">20</div>
<div class="m tbl" style="left:1086.5px;top:599.5px;color:#1a1a1a;-webkit-text-stroke:0.12px currentColor"><i style="transform:scaleX(0.73)">D</i><i style="transform:scaleX(0.87)">T</i><i>2</i><i>0</i><i>3</i><i>8</i></div>
<div class="t tn" style="left:1185.5px;top:596.5px;">0</div>
<div class="t tb" style="left:1287px;top:596.5px;">带符号<span class="tn2">32</span>位整数型</div>
<div class="t tn" style="left:1045px;top:617px;">21</div>
<div class="t tn" style="left:1045px;top:637px;">22</div>
<div class="t tn" style="left:1045px;top:657px;">23</div>
<div class="t tn" style="left:1045px;top:677px;">24</div>
<div class="t tb" style="left:1411px;top:216.5px;">上扫码结果</div>
<div style="left:1021px;top:218px;width:63px;height:21px;box-sizing:border-box;border:1px solid #00ff00;border-left-width:2px"></div>
<div style="left:1496px;top:187px;width:19px;height:501px;background:#f0f0f0;"></div>
<div style="left:1496px;top:209px;width:19px;height:438px;background:#cdcdcd;"></div>
<svg style="position:absolute;left:1496px;top:192px" width="19" height="14"><path d="M5.5 9 L9.5 5 L13.5 9" fill="none" stroke="#606060" stroke-width="2"/></svg>
<svg style="position:absolute;left:1496px;top:670px" width="19" height="14"><path d="M5.5 5 L9.5 9 L13.5 5" fill="none" stroke="#606060" stroke-width="2"/></svg>
<div style="left:1020px;top:688px;width:495px;height:20px;background:#f0f0f0;"></div>
<div style="left:1043px;top:688px;width:319px;height:19px;background:#cdcdcd;"></div>
<svg style="position:absolute;left:1024px;top:691px" width="14" height="14"><path d="M9 3 L5 7 L9 11" fill="none" stroke="#606060" stroke-width="2"/></svg>
<svg style="position:absolute;left:1478px;top:691px" width="14" height="14"><path d="M5 3 L9 7 L5 11" fill="none" stroke="#606060" stroke-width="2"/></svg>
</div></body></html>
